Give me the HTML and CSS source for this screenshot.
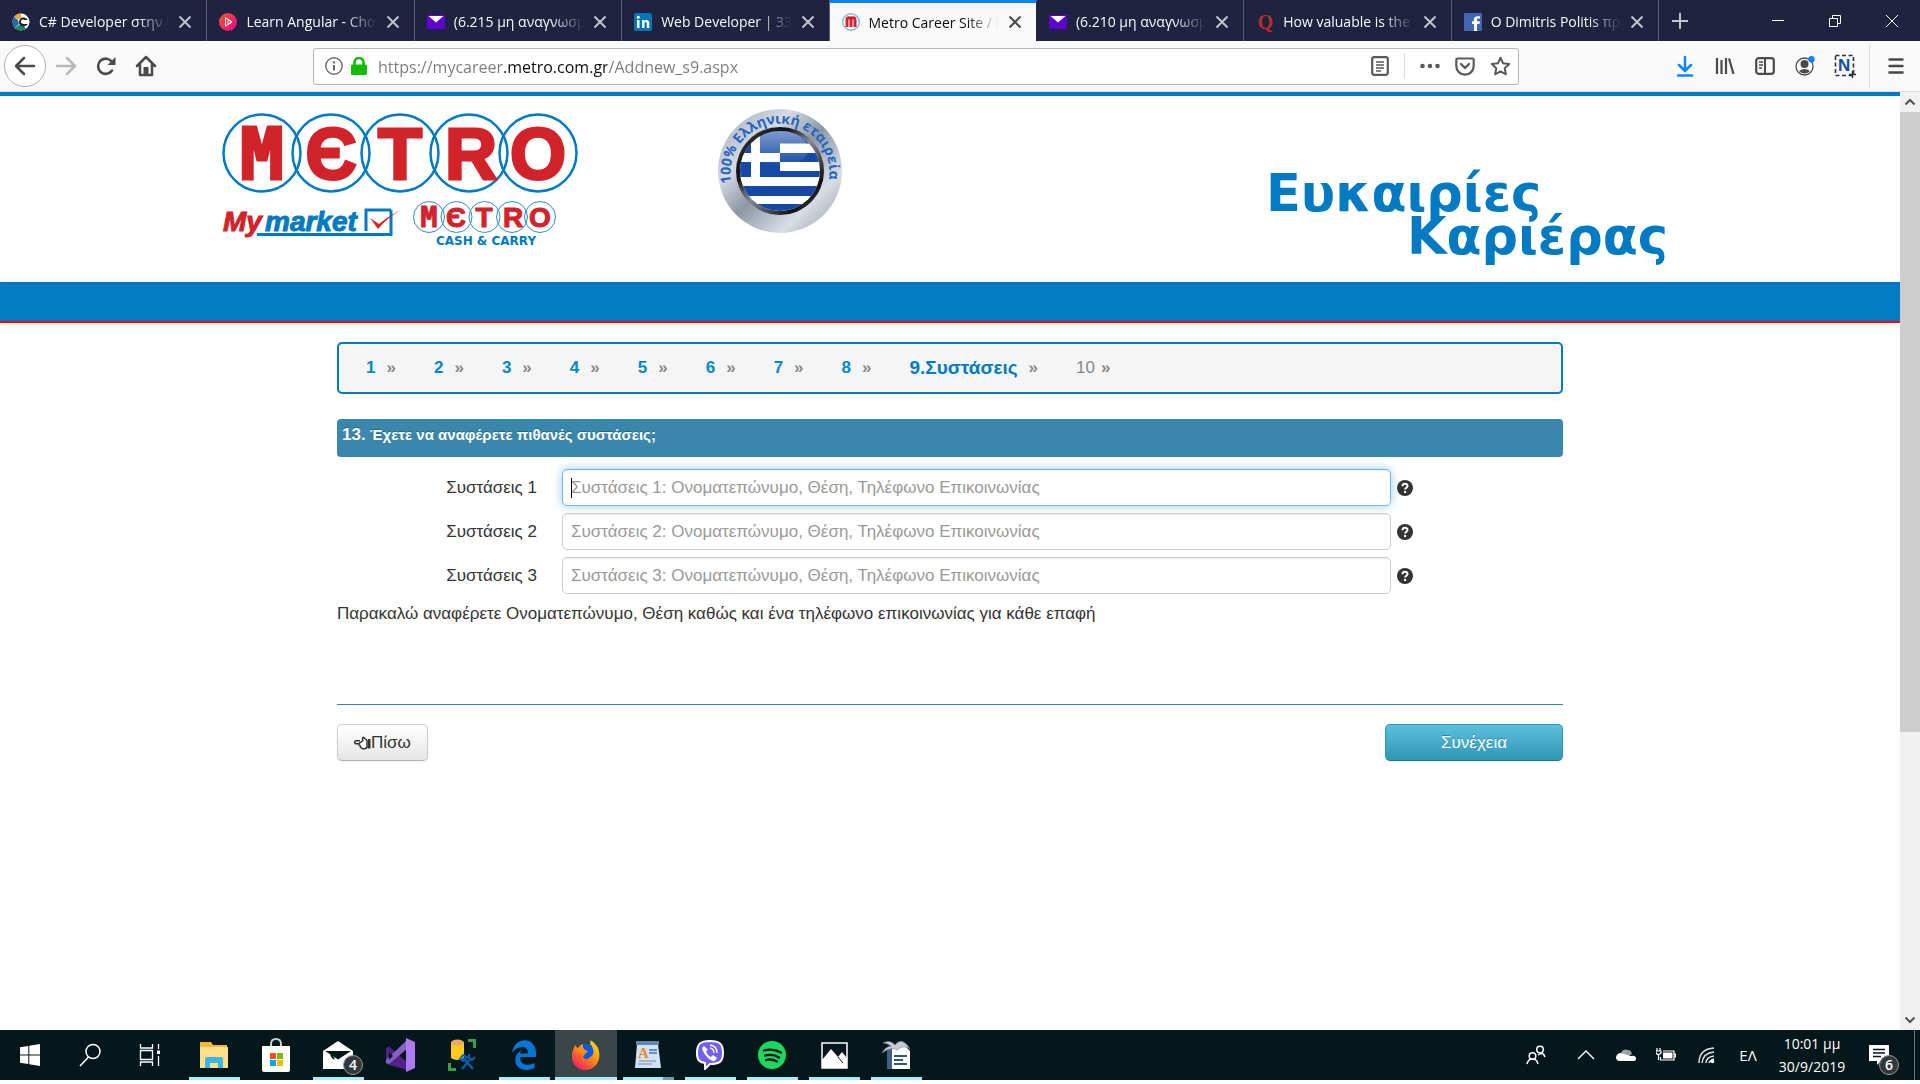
FILE: index.html
```html
<!DOCTYPE html>
<html lang="el">
<head>
<meta charset="utf-8">
<meta name="viewport" content="width=device-width, initial-scale=1">
<title>Metro Career Site</title>
<link rel="stylesheet" href="styles.css">
</head>
<body>
<svg class="defs" width="0" height="0" aria-hidden="true">
  <defs>
    <symbol id="x" viewBox="0 0 14 14"><path d="M1.500 1.500 12.500 12.500M12.500 1.500 1.500 12.500" fill="none" stroke="currentColor" stroke-width="2"/></symbol>
    <symbol id="mail" viewBox="0 0 18 14"><rect width="18" height="14" rx="1" fill="#5f01d1"/><path d="M1.500 1h15L9 7.500z" fill="#fff"/></symbol>
    <symbol id="help" viewBox="0 0 18 18"><circle cx="9" cy="9" r="8" fill="#333"/><path d="M6.500 7.200C6.500 4 11.700 4.200 11.500 7c-.1 1.700-2.400 1.700-2.400 3.600" fill="none" stroke="#fff" stroke-width="2"/><circle cx="9.100" cy="13" r="1.200" fill="#fff"/></symbol>
  </defs>
</svg>

<header class="browser">
  <div class="tabs">
    <div class="tab-strip">
      <div class="tab">
        <svg class="fav" viewBox="0 0 18 18"><circle cx="9" cy="9" r="8.500" fill="#fff"/><path d="M9 .5A8.500 8.500 0 0 0 2 4l4 2.500L9 5z" fill="#f5a623"/><path d="M2 4a8.500 8.500 0 0 0 1 11l4-4-1-4z" fill="#1d6fa8"/><path d="M3 15a8.500 8.500 0 0 0 11 .8L11 12H7z" fill="#178a6a"/><path d="M9 5c4-1 5 0 7 2h-4c-3-2-5 4 0 4h4c-3 4-9 3-9-2 0-2 1-3 2-4z" fill="#222"/></svg>
        <button class="tab-title">C# Developer στην θέση</button>
        <button class="tab-close" aria-label="Κλείσιμο"><svg><use href="#x"/></svg></button>
      </div>
      <div class="tab">
        <svg class="fav" viewBox="0 0 18 18"><defs><linearGradient id="ps" x2="1" y2="1"><stop stop-color="#f15b2a"/><stop offset="1" stop-color="#ec008c"/></linearGradient></defs><circle cx="9" cy="9" r="9" fill="url(#ps)"/><path d="M6.500 4.800 13 9l-6.500 4.200zM9 6.500v5L12.500 9z" fill="none" stroke="#fff"/></svg>
        <button class="tab-title">Learn Angular - Choose</button>
        <button class="tab-close" aria-label="Κλείσιμο"><svg><use href="#x"/></svg></button>
      </div>
      <div class="tab">
        <svg class="fav wide"><use href="#mail"/></svg>
        <button class="tab-title">(6.215 μη αναγνωσμένα)</button>
        <button class="tab-close" aria-label="Κλείσιμο"><svg><use href="#x"/></svg></button>
      </div>
      <div class="tab">
        <svg class="fav" viewBox="0 0 18 18"><rect width="18" height="18" rx="2" fill="#0077b5"/><path d="M3 7h2.500v8H3zM8 7h2.300v1.200C11.500 6.300 15.300 6.500 15.300 10v5h-2.500v-4.300c0-2.200-2.300-2-2.300 0V15H8z" fill="#fff"/><circle cx="4.250" cy="4.300" r="1.500" fill="#fff"/></svg>
        <button class="tab-title">Web Developer | 33 new</button>
        <button class="tab-close" aria-label="Κλείσιμο"><svg><use href="#x"/></svg></button>
      </div>
      <div class="tab active">
        <svg class="fav" viewBox="0 0 18 18"><circle cx="9" cy="9" r="8.300" fill="#fff" stroke="#7fb7dd" stroke-width="1.400"/><path d="M5 14V6.500C5 4 9 4 9 6.500V14M9 6.500C9 4 13 4 13 6.500V14" fill="none" stroke="#d2232a" stroke-width="3"/></svg>
        <button class="tab-title">Metro Career Site / Be</button>
        <button class="tab-close" aria-label="Κλείσιμο"><svg><use href="#x"/></svg></button>
      </div>
      <div class="tab">
        <svg class="fav wide"><use href="#mail"/></svg>
        <button class="tab-title">(6.210 μη αναγνωσμένα)</button>
        <button class="tab-close" aria-label="Κλείσιμο"><svg><use href="#x"/></svg></button>
      </div>
      <div class="tab">
        <span class="fav quora">Q</span>
        <button class="tab-title">How valuable is the best</button>
        <button class="tab-close" aria-label="Κλείσιμο"><svg><use href="#x"/></svg></button>
      </div>
      <div class="tab">
        <svg class="fav" viewBox="0 0 18 18"><rect width="18" height="18" rx="1" fill="#4267b2"/><path d="M10 18v-7H8V8.200h2V6.500C10 3.800 11.500 2.800 16 3.300v2.300c-2.400 0-3-.1-3 1.200v1.400h2.900L15.500 11H13v7z" fill="#fff"/></svg>
        <button class="tab-title">Ο Dimitris Politis πρόσθεσε</button>
        <button class="tab-close" aria-label="Κλείσιμο"><svg><use href="#x"/></svg></button>
      </div>
    </div>
    <button class="new-tab" aria-label="Νέα καρτέλα"><svg width="18" height="18" viewBox="0 0 18 18"><path d="M9 1v16M1 9h16" stroke="currentColor" stroke-width="2"/></svg></button>
    <div class="window-buttons">
      <button aria-label="Ελαχιστοποίηση"><svg width="14" height="14" viewBox="0 0 14 14"><path d="M1 6.500h12" stroke="#fff"/></svg></button>
      <button aria-label="Επαναφορά"><svg width="14" height="14" viewBox="0 0 14 14"><path d="M1.500 4.500h8v8h-8zM4.500 4.500v-3h8v8h-3" fill="none" stroke="#fff"/></svg></button>
      <button aria-label="Κλείσιμο παραθύρου"><svg width="14" height="14" viewBox="0 0 14 14"><path d="m1 1 12 12M13 1 1 13" stroke="#fff"/></svg></button>
    </div>
  </div>

  <div class="toolbar">
    <div class="nav-buttons">
      <button class="back" aria-label="Πίσω"><svg width="22" height="20" viewBox="0 0 22 20"><path d="M20 10H3M10 2l-8 8 8 8" fill="none" stroke="#4a4a4b" stroke-width="2.500" stroke-linecap="round" stroke-linejoin="round"/></svg></button>
      <button aria-label="Εμπρός"><svg width="22" height="20" viewBox="0 0 22 20"><path d="M2 10h17M12 2l8 8-8 8" fill="none" stroke="#b9b9ba" stroke-width="2.500" stroke-linecap="round" stroke-linejoin="round"/></svg></button>
      <button aria-label="Ανανέωση"><svg width="20" height="20" viewBox="0 0 20 20"><path d="M16 14.500A7.600 7.600 0 1 1 16 6" fill="none" stroke="#4a4a4b" stroke-width="2.600" stroke-linecap="round"/><path d="M19.500 1v8h-8z" fill="#4a4a4b"/></svg></button>
      <button aria-label="Αρχική"><svg width="22" height="22" viewBox="0 0 22 22"><path d="M2 11 11 2l9 9M5 9.500V20h12V9.500" fill="none" stroke="#4a4a4b" stroke-width="2.500" stroke-linecap="round" stroke-linejoin="round"/><path d="M8.500 19.500V12h5v7.500z" fill="#4a4a4b"/></svg></button>
    </div>
    <div class="url-bar">
      <svg width="18" height="18" viewBox="0 0 18 18"><circle cx="9" cy="9" r="8.200" fill="none" stroke="#6b6b6c" stroke-width="1.400"/><path d="M9 8v5.500M9 4.200v2.200" stroke="#6b6b6c" stroke-width="2"/></svg>
      <svg width="16" height="18" viewBox="0 0 16 18"><path d="M3.500 8V5.500a4.500 4.500 0 0 1 9 0V8" fill="none" stroke="#12bc00" stroke-width="2.600"/><rect y="7.500" width="16" height="10.500" rx="1.500" fill="#12bc00"/></svg>
      <input class="url" type="text" aria-label="Διεύθυνση" value="https://mycareer.metro.com.gr/Addnew_s9.aspx">
      <div class="url-actions">
        <button aria-label="Προβολή ανάγνωσης"><svg width="18" height="20" viewBox="0 0 18 20"><rect x="1.200" y="1.200" width="15.600" height="17.600" rx="2" fill="none" stroke="#5a5a5b" stroke-width="2.200"/><path d="M5 6h8M5 9h8M5 12h8M5 15h5" stroke="#5a5a5b" stroke-width="1.400"/></svg></button>
        <span class="divider"></span>
        <button aria-label="Ενέργειες"><svg width="20" height="6" viewBox="0 0 20 6"><g fill="#5a5a5b"><circle cx="2.500" cy="3" r="2.300"/><circle cx="10" cy="3" r="2.300"/><circle cx="17.500" cy="3" r="2.300"/></g></svg></button>
        <button aria-label="Pocket"><svg width="20" height="19" viewBox="0 0 20 19"><path d="M2.500 1.500h15q1.200 0 1.200 1.200V9a8.700 8.700 0 0 1-17.400 0V2.700q0-1.200 1.200-1.200z" fill="none" stroke="#5a5a5b" stroke-width="2.200"/><path d="m6 7 4 4 4-4" fill="none" stroke="#5a5a5b" stroke-width="2.400" stroke-linecap="round" stroke-linejoin="round"/></svg></button>
        <button aria-label="Σελιδοδείκτης"><svg width="21" height="20" viewBox="0 0 21 20"><path d="m10.500 1.700 2.600 5.600 6.100.7-4.500 4.200 1.200 6.100-5.400-3-5.400 3 1.200-6.100L1.800 8l6.100-.7z" fill="none" stroke="#5a5a5b" stroke-width="2" stroke-linejoin="round"/></svg></button>
      </div>
    </div>
    <div class="tools">
      <button aria-label="Λήψεις"><svg width="18" height="21" viewBox="0 0 18 21"><path d="M9 1v13M3 9l6 6 6-6M2 19.500h14" fill="none" stroke="#0a84ff" stroke-width="2.500" stroke-linecap="round"/></svg></button>
      <button aria-label="Βιβλιοθήκη"><svg width="20" height="20" viewBox="0 0 20 20"><path d="M2 2v16M6.500 4v14M11 2v16M14 2.500 18.500 18" stroke="#4a4a4b" stroke-width="2.200"/></svg></button>
      <button aria-label="Πλευρική στήλη"><svg width="20" height="18" viewBox="0 0 20 18"><rect x="1.200" y="1.200" width="17.600" height="15.600" rx="2.500" fill="none" stroke="#4a4a4b" stroke-width="2.200"/><path d="M10 1v16" stroke="#4a4a4b" stroke-width="2"/><path d="M4 5h4M4 8h4M4 11h3" stroke="#4a4a4b" stroke-width="1.300"/></svg></button>
      <button aria-label="Λογαριασμός"><svg width="20" height="20" viewBox="0 0 20 20"><circle cx="9.500" cy="10.500" r="8.500" fill="none" stroke="#4a4a4b" stroke-width="1.300"/><circle cx="9.500" cy="8" r="4" fill="#4a4a4b"/><path d="M4 15q5.500-4 11 0-5.500 5-11 0z" fill="#4a4a4b"/><circle cx="16.500" cy="3.200" r="3.200" fill="#0a84ff"/></svg></button>
      <button aria-label="Nimbus"><svg width="22" height="24" viewBox="0 0 22 24"><rect x="1.500" y="1.500" width="18" height="20" fill="none" stroke="#333" stroke-width="1.600" stroke-dasharray="4 2.500"/><text x="4" y="17" class="nimbus">N</text><path d="M15 20.500h7M18.500 17v7" stroke="#333" stroke-width="1.500"/></svg></button>
      <span class="divider tall"></span>
      <button aria-label="Μενού"><svg width="16" height="18" viewBox="0 0 16 18"><path d="M1.500 2.500h13M1.500 9h13M1.500 15.500h13" stroke="#4a4a4b" stroke-width="2.500" stroke-linecap="round"/></svg></button>
    </div>
  </div>
</header>

<div class="viewport">
  <div class="page">
    <header class="masthead">
      <div class="masthead-inner">
        <svg class="logo" width="360" height="140" viewBox="220 110 360 140" role="img" aria-label="Metro, My market, Metro Cash &amp; Carry">
          <g fill="none" stroke="#007ac3" stroke-width="2.500"><circle cx="262" cy="153" r="38.500"/><circle cx="331" cy="153" r="38.500"/><circle cx="400" cy="153" r="38.500"/><circle cx="469" cy="153" r="38.500"/><circle cx="538" cy="153" r="38.500"/></g>
          <g class="logo-big"><text class="narrow" x="262" y="179">M</text><text x="331" y="179">Є</text><text x="400" y="179">T</text><text x="471" y="179">R</text><text x="538" y="179">O</text></g>
          <text class="my" x="223" y="231">My</text><text class="market" x="265" y="231">market</text>
          <path d="M366 231v-21h25M391 210v24.500H257" fill="none" stroke="#007ac3" stroke-width="3"/>
          <path d="m370 218 8 11q10-12 23-19-11 5-22 14z" fill="#d2232a"/>
          <g fill="none" stroke="#2b8fce"><circle cx="429" cy="217" r="15.500"/><circle cx="456.500" cy="217" r="15.500"/><circle cx="484.500" cy="217" r="15.500"/><circle cx="512" cy="217" r="15.500"/><circle cx="540" cy="217" r="15.500"/></g>
          <g class="logo-small"><text class="narrow" x="429" y="227">M</text><text x="456" y="227">Є</text><text x="484" y="227">T</text><text x="513" y="227">R</text><text x="540" y="227">O</text></g>
          <text class="cash" x="486" y="245">CASH &amp; CARRY</text>
        </svg>
        <svg class="badge" width="126" height="126" viewBox="-63 -63 126 126" role="img" aria-label="100% Ελληνική εταιρεία">
          <defs>
            <linearGradient id="silver" x1="0" y1="0" x2="1" y2="1"><stop stop-color="#a3abb9"/><stop offset=".3" stop-color="#d5dae2"/><stop offset=".5" stop-color="#8d97a6"/><stop offset=".75" stop-color="#d9dee5"/><stop offset="1" stop-color="#8f99a8"/></linearGradient>
            <linearGradient id="rim" x1="0" y1="0" x2="1" y2="1"><stop stop-color="#444"/><stop offset=".3" stop-color="#111"/><stop offset=".5" stop-color="#889"/><stop offset=".8" stop-color="#111"/><stop offset="1" stop-color="#778"/></linearGradient>
            <linearGradient id="gloss" x2="0" y2="1"><stop stop-color="#fff" stop-opacity=".45"/><stop offset="1" stop-color="#fff" stop-opacity="0"/></linearGradient>
            <clipPath id="disc"><circle r="40"/></clipPath>
            <path id="arc" d="M-48.500 12A49.500 49.500 0 1 1 49 9"/>
          </defs>
          <circle r="62" fill="url(#silver)"/>
          <circle r="44" fill="url(#rim)"/>
          <g clip-path="url(#disc)">
            <rect x="-41" y="-41" width="82" height="82" fill="#fff"/>
            <path d="M-41-41h82v13.500h-82zM0-18h41v9H0zM0 0h41v6H0z" fill="#1549a5"/>
            <path d="M-41-41H0V6h-41z" fill="#1549a5"/>
            <path d="M-29-41h9V6h-9zM-41-18H0v9h-41z" fill="#fff"/>
            <path d="M-41 15h82v10h-82zM-41 33h82v8h-82z" fill="#1549a5"/>
            <ellipse cx="0" cy="-22" rx="28" ry="18" fill="url(#gloss)"/>
          </g>
          <text class="badge-text"><textPath href="#arc">100% Ελληνική εταιρεία</textPath></text>
        </svg>
        <h1 class="headline"><span>Ευκαιρίες</span><span class="second">Καριέρας</span></h1>
      </div>
      <div class="band"></div>
    </header>

    <main class="content">
      <nav class="steps" aria-label="Βήματα">
        <ol>
          <li><a href="#1">1</a><span>»</span></li>
          <li><a href="#2">2</a><span>»</span></li>
          <li><a href="#3">3</a><span>»</span></li>
          <li><a href="#4">4</a><span>»</span></li>
          <li><a href="#5">5</a><span>»</span></li>
          <li><a href="#6">6</a><span>»</span></li>
          <li><a href="#7">7</a><span>»</span></li>
          <li><a href="#8">8</a><span>»</span></li>
          <li><a class="current" href="#9" aria-current="step">9.Συστάσεις</a><span>»</span></li>
          <li class="next">10<span>»</span></li>
        </ol>
      </nav>

      <form>
        <h2 class="question"><span class="number">13.</span> Έχετε να αναφέρετε πιθανές συστάσεις;</h2>
        <div class="fields">
          <div class="row">
            <label for="ref1">Συστάσεις 1</label>
            <div class="control focused"><input id="ref1" type="text" placeholder="Συστάσεις 1: Ονοματεπώνυμο, Θέση, Τηλέφωνο Επικοινωνίας"></div>
            <svg class="help"><use href="#help"/></svg>
          </div>
          <div class="row">
            <label for="ref2">Συστάσεις 2</label>
            <div class="control"><input id="ref2" type="text" placeholder="Συστάσεις 2: Ονοματεπώνυμο, Θέση, Τηλέφωνο Επικοινωνίας"></div>
            <svg class="help"><use href="#help"/></svg>
          </div>
          <div class="row">
            <label for="ref3">Συστάσεις 3</label>
            <div class="control"><input id="ref3" type="text" placeholder="Συστάσεις 3: Ονοματεπώνυμο, Θέση, Τηλέφωνο Επικοινωνίας"></div>
            <svg class="help"><use href="#help"/></svg>
          </div>
        </div>
        <p class="note">Παρακαλώ αναφέρετε Ονοματεπώνυμο, Θέση καθώς και ένα τηλέφωνο επικοινωνίας για κάθε επαφή</p>
        <div class="actions">
          <button class="btn" type="button"><svg width="17" height="14" viewBox="0 0 17 14"><path d="M6 4.800H2.200a1.500 1.500 0 0 0 0 3H5M5 7.500q-.5 1.500 1 2 0 1.500 1 2 .5 1.200 2 1.200h2l2-1.200V4.500L9.500 1.200Q8 1.500 8.800 4.800z" fill="#fff" stroke="#333" stroke-width="1.500"/><rect x="14" y="3" width="2.500" height="9.500" fill="#333"/></svg>Πίσω</button>
          <button class="btn primary" type="submit">Συνέχεια</button>
        </div>
      </form>
    </main>
  </div>
  <div class="scrollbar" aria-hidden="true">
    <svg width="20" height="20" viewBox="0 0 20 20"><path d="m5.500 12.500 4.500-4.500 4.500 4.500" fill="none" stroke="#505050" stroke-width="2"/></svg>
    <div class="track"><div class="thumb"></div></div>
    <svg width="20" height="20" viewBox="0 0 20 20"><path d="m5.500 7.500 4.500 4.500 4.500-4.500" fill="none" stroke="#505050" stroke-width="2"/></svg>
  </div>
</div>

<footer class="taskbar">
  <div class="system">
    <button aria-label="Έναρξη"><svg width="20" height="22" viewBox="0 0 20 20" preserveAspectRatio="none"><path d="M0 3l8.300-1.200v7.700H0zM9.300 1.600 20 0v9.500H9.300zM0 10.500h8.300v7.700L0 17zM9.300 10.500H20V20L9.300 18.400z" fill="#fff"/></svg></button>
    <button aria-label="Αναζήτηση"><svg width="22" height="24" viewBox="0 0 22 24"><circle cx="14" cy="8.500" r="7" fill="none" stroke="#fff" stroke-width="1.500"/><path d="M9.500 14 1 23" stroke="#fff" stroke-width="1.500"/></svg></button>
    <button aria-label="Προβολή εργασιών"><svg width="22" height="24" viewBox="0 0 22 24"><path d="M1.500 1v4h12V1M1.500 7.500h12v9h-12zM1.500 23v-4h12v4M19.500 1v5M19.500 13v10" fill="none" stroke="#fff" stroke-width="1.300"/><path d="M18 7.500h3v3.500h-3z" fill="#fff"/></svg></button>
  </div>
  <div class="apps">
    <button class="open" aria-label="Εξερεύνηση"><svg width="28" height="28" viewBox="0 0 28 28"><path d="M0 1h11l2 3h14v23H0z" fill="#f0b93a"/><path d="M0 6h28v21H0z" fill="#ffe08a"/><path d="M5 27V18q0-2 2-2h14q2 0 2 2v9h-5v-5h-8v5z" fill="#3fb4e8"/></svg></button>
    <button aria-label="Store"><svg width="30" height="34" viewBox="0 0 30 34"><path d="M10 9V6q0-5 5-5t5 5v3" fill="none" stroke="#ccc" stroke-width="2"/><path d="M1 8h28v24q0 2-2 2H3q-2 0-2-2z" fill="#fff"/><path d="M9 15h6v6H9z" fill="#f25022"/><path d="M16 15h6v6h-6z" fill="#7fba00"/><path d="M9 22h6v6H9z" fill="#00a4ef"/><path d="M16 22h6v6h-6z" fill="#ffb900"/></svg></button>
    <button class="open" aria-label="Mail"><svg width="30" height="28" viewBox="0 0 30 28"><path d="M0 10 15 0l15 10v18H0z" fill="#fff"/><path d="M2 10h26L15 18.500z" fill="#04171b"/><path d="m8 14 3 4" stroke="#04171b" stroke-width="2"/></svg><span class="count">4</span></button>
    <button aria-label="Visual Studio"><svg width="30" height="34" viewBox="0 0 30 34"><path d="M1 10 4 8.500 22 24v8L3 26.500 1 25z" fill="#52218a"/><path d="M1 25 4 26 22 11V2L1 22z" fill="#865fc5"/><path d="m21 0 9 4v26l-9 4z" fill="#b179f1"/><path d="m4 14 4 4-4 4z" fill="#04171b"/></svg></button>
    <button aria-label="SQL"><svg width="28" height="32" viewBox="0 0 28 32"><path d="M3 3v16q6 4 13 0V3z" fill="#ffcb1f"/><ellipse cx="9.500" cy="3.500" rx="6.500" ry="3" fill="#f0a860"/><path d="M20 1.500h6.500V9M1.500 24v6.500H8" fill="none" stroke="#3f9b46" stroke-width="3"/><path d="m15 19 10 11M23 19 14 30" stroke="#0d5ea8" stroke-width="2.500"/><path d="m12 20 3-4 4 2-4 4zM21 15v4l3 2 3-3" fill="none" stroke="#0d5ea8" stroke-width="2"/></svg></button>
    <button class="open" aria-label="Edge"><svg width="26" height="30" viewBox="0 0 26 30"><path d="M1 13C3-4 25-4 25 13v4H9c0 9 9 9 14.500 6v5C13 33 3 28 4.500 18c.5-4 4-7 7-8-2 1-2.500 3-2.500 3.500h8c0-9-11-8-16-.5z" fill="#0078d7"/></svg></button>
    <button class="open active" aria-label="Firefox"><svg width="28" height="30" viewBox="0 0 28 30"><defs><linearGradient id="ff" x1=".9" y1="0" x2=".2" y2="1"><stop stop-color="#ffe226"/><stop offset=".5" stop-color="#ff8a16"/><stop offset="1" stop-color="#f5156c"/></linearGradient></defs><circle cx="14" cy="14" r="10" fill="#0a5be0"/><path d="M3 5q1 2 3 3 2-3 5-4-1 4 2 6l3 1-3 3-2 3q3 4 6 1 6-3 4-9-1-4-3-5 1-2 0-4 4 2 6 5l2 3c5 13-4 22-13 22S-3 21 1 10z" fill="url(#ff)"/></svg></button>
    <button class="open grouped" aria-label="WordPad"><svg width="26" height="28" viewBox="0 0 26 28"><path d="M2 3h21l3 24H0z" fill="#cfe3f5"/><rect x="1" width="23" height="4" fill="#5d88b0"/><text x="3" y="17" class="wordpad">A</text><path d="M14 9h8M14 12h8" stroke="#4878b0" stroke-width="1.600"/><path d="M4 20h17M3 23h14" stroke="#96a9bd" stroke-width="1.500"/></svg></button>
    <button class="open" aria-label="Viber"><svg width="28" height="30" viewBox="0 0 28 30"><path d="M14 1c10 0 13 3 13 12s-4 11-13 11l-5 5v-6C3 22 1 20 1 13 1 4 4 1 14 1z" fill="#7360f2" stroke="#fff" stroke-width="2"/><path d="M8 6q-3 2-1 5 4 8 10 10 2 1 4-3l-4-3-2 2q-4-2-5-6l2-1z" fill="#fff"/><path d="M14 5q7 1 7 8M14 8q4 1 4 5" fill="none" stroke="#fff" stroke-width="1.300"/></svg></button>
    <button class="open" aria-label="Spotify"><svg width="28" height="28" viewBox="0 0 28 28"><circle cx="14" cy="14" r="14" fill="#1ed760"/><path d="M6 9.500q9-2.500 17 2M7 14.500q8-2 14 2M8 19q6-1.500 11 1.500" fill="none" stroke="#04171b" stroke-width="2.300" stroke-linecap="round"/></svg></button>
    <button class="open" aria-label="Φωτογραφίες"><svg width="27" height="27" viewBox="0 0 27 27"><path d="M1 1h25v25H1z" fill="none" stroke="#fff" stroke-width="1.500"/><path d="M1 18 10 7l7 8 4-5 5 6v10H1z" fill="#fff"/><path d="m17 15 5 6" stroke="#04171b"/></svg></button>
    <button class="open" aria-label="OpenOffice"><svg width="30" height="30" viewBox="0 0 30 30"><path d="M6 8h20l3 4v17H6z" fill="#3f6284"/><path d="M11 6h13l5 5v18H11z" fill="#fff"/><path d="M13 16h13M13 20h9M13 24h13" stroke="#35597e" stroke-width="1.800"/><path d="M2 3q7-4 12 2Q21-4 29 9q-7-5-13 1-5-4-15 3 3-6 9-7-4-3-8-3z" fill="#c6ccd3" stroke="#6d7882" stroke-width=".6"/></svg></button>
  </div>
  <div class="tray">
    <button aria-label="Άτομα"><svg width="20" height="20" viewBox="0 0 20 20"><g fill="none" stroke="#fff" stroke-width="1.500"><circle cx="14" cy="4.500" r="3.300"/><circle cx="6.500" cy="11" r="3.300"/><path d="M1 19q1-5 5.500-5T12 19M12 10q5-4 7 2"/></g></svg></button>
    <button aria-label="Κρυφά εικονίδια"><svg width="18" height="10" viewBox="0 0 18 10"><path d="m1 9 8-8 8 8" fill="none" stroke="#fff" stroke-width="1.400"/></svg></button>
    <button aria-label="OneDrive"><svg width="20" height="14" viewBox="0 0 20 14"><path d="M5 5q2-5 7-3 3 0 4 4l-6 3z" fill="#9aa3a6"/><path d="M4 13q-4 0-4-4 1-4 5-4l10 3q5-1 5 3 0 2-3 2z" fill="#fff"/></svg></button>
    <button aria-label="Μπαταρία"><svg width="20" height="14" viewBox="0 0 20 14"><path d="M7 3h11v9H4.500V9M18 6h1.500v3H18" fill="none" stroke="#fff" stroke-width="1.200"/><path d="M7 4.500h9.500v6H7z" fill="#fff"/><path d="M1 0v3m3-3v3M0 3h5v2q-2.500 3-5 0zM2.500 6v6" fill="none" stroke="#fff" stroke-width="1.200"/></svg></button>
    <button aria-label="Δίκτυο"><svg width="17" height="17" viewBox="0 0 17 17"><path d="M1 16Q1 2 16 1M4 16Q5 6 16 5M8 16q0-6 8-7M11 16q1-3 5-4" fill="none" stroke="#dfe4e5" stroke-width="1.400"/><circle cx="14.500" cy="14.500" r="1.800" fill="#fff"/></svg></button>
    <button class="lang">ΕΛ</button>
    <button class="clock"><span>10:01 μμ</span><span>30/9/2019</span></button>
    <button class="notes" aria-label="Ειδοποιήσεις"><svg width="20" height="20" viewBox="0 0 20 20"><path d="M0 0h20v16h-8l-4 4v-4H0z" fill="#fff"/><path d="M4 4.500h12M4 8h12M4 11.500h8" stroke="#04171b" stroke-width="1.300"/></svg><span class="count">6</span></button>
  </div>
</footer>
</body>
</html>
```
FILE: styles.css
```css
* { box-sizing: border-box; }

:root {
  --blue: #007ac3;
  --ui: "Open Sans", "Noto Sans", sans-serif;
  --body: "Liberation Sans", Arial, sans-serif;
}

body {
  margin: 0;
  min-height: 100vh;
  padding-bottom: 4px;
  display: flex;
  flex-direction: column;
  background: #fff;
  font-family: var(--body);
  color: #333;
}

button {
  padding: 0;
  border: 0;
  background: none;
  font: inherit;
  color: inherit;
  display: flex;
  align-items: center;
  justify-content: center;
}

svg { display: block; flex: none; }
.defs { position: absolute; }

/* Browser chrome */
.browser { font-family: var(--ui); }

.tabs {
  display: flex;
  height: 41px;
  background: #202340;
  color: #f9f9fa;
}

.tab-strip {
  flex: 0 1 1659px;
  min-width: 0;
  display: flex;
}

.tab {
  flex: 1 1 0;
  min-width: 0;
  display: flex;
  align-items: center;
  gap: 9px;
  padding: 2px 14px 0 12px;
  border-right: 1px solid #5b5d73;
}

.tab.active {
  background: #f9f9fa;
  color: #0c0c0d;
  border-top: 3px solid #0a84ff;
  border-right-color: #202340;
  padding-top: 0;
}

.fav { width: 18px; height: 18px; flex: none; }
.fav.wide { height: 14px; }

.quora {
  color: #b92b27;
  font: 700 20px/18px "Liberation Serif", serif;
  text-align: center;
}

.tab-title {
  flex: 1;
  min-width: 0;
  justify-content: flex-start;
  overflow: hidden;
  white-space: nowrap;
  font-size: 14px;
  -webkit-mask-image: linear-gradient(90deg, #000 75%, transparent);
  mask-image: linear-gradient(90deg, #000 75%, transparent);
}

.tab-close { color: #c3c4cd; }
.tab-close svg { width: 14px; height: 14px; }
.active .tab-close { color: #4a4a4b; }
.new-tab { width: 42px; color: #c3c4cd; }

.window-buttons { display: flex; margin-left: auto; }
.window-buttons button { width: 57px; }

.toolbar {
  display: flex;
  align-items: center;
  height: 51px;
  background: #f9f9fa;
  border-bottom: 1px solid #dcdcdd;
}

.nav-buttons { display: flex; padding-left: 4px; width: 313px; }
.nav-buttons button { width: 40px; }
.nav-buttons .back {
  width: 42px;
  height: 42px;
  border: 1px solid #b1b1b3;
  border-radius: 50%;
  background: #fff;
}

.url-bar {
  flex: 1;
  display: flex;
  align-items: center;
  height: 37px;
  gap: 16px;
  padding: 0 7px 0 11px;
  border: 1px solid #b6b6b7;
  border-radius: 3px;
  background: #fff;
}

.url-bar > svg + svg { margin-left: -8px; }

.url {
  flex: 1;
  min-width: 0;
  margin-left: -5px;
  padding: 2px 0 0;
  border: 0;
  outline: 0;
  font: 16px/24px var(--ui);
  color: transparent;
  background: linear-gradient(90deg, #7a7a7c 125px, #0c0c0d 125px 229px, #7a7a7c 229px);
  -webkit-background-clip: text;
  background-clip: text;
}

.url-actions { display: flex; align-items: center; gap: 15px; }
.divider { width: 1px; height: 26px; background: #dcdcdd; }

.tools {
  display: flex;
  align-items: center;
  width: 401px;
  padding-left: 146px;
}

.tools button { width: 40px; }
.divider.tall { height: 42px; margin: 0 6px 0 4px; }

.nimbus { font: 700 17px "Liberation Sans", sans-serif; fill: #0b4ea2; }

/* Viewport and scrollbar */
.viewport { flex: 1; display: flex; }
.page { flex: 1; min-width: 0; }

.scrollbar {
  width: 20px;
  display: flex;
  flex-direction: column;
  background: #f0f0f0;
}

.track { flex: 1; }
.thumb { height: 69%; background: #cdcdcd; }

/* Masthead */
.masthead { border-top: 4px solid var(--blue); }

.masthead-inner {
  display: flex;
  align-items: flex-start;
  height: 186px;
  max-width: 1460px;
  margin: 0 auto;
  padding-top: 14px;
}

.badge { margin-left: 137px; margin-top: -2px; }

.logo text { font-family: "Liberation Sans", Arial, sans-serif; font-weight: 700; }
.logo-big, .logo-small { fill: #d2232a; stroke: #d2232a; text-anchor: middle; }
.logo-big { font-size: 72px; stroke-width: 3px; }
.logo-small { font-size: 28px; stroke-width: 1px; }
.logo .narrow { font-family: "DejaVu Sans Mono", monospace; }
.logo .my, .logo .market { font-size: 28px; font-style: italic; stroke-width: 1px; }
.logo .my { fill: #d2232a; stroke: #d2232a; }
.logo .market { fill: var(--blue); stroke: var(--blue); }
.logo .cash { font-family: "DejaVu Sans", sans-serif; font-size: 12px; fill: var(--blue); text-anchor: middle; }

.badge-text { font: 700 14px "Open Sans", sans-serif; fill: #2464c4; }

.headline {
  display: flex;
  flex-direction: column;
  margin: 62px 12px 0 auto;
  font: 700 51px/43px "DejaVu Sans", sans-serif;
  color: var(--blue);
}

.headline .second { margin-left: 141px; }

.band {
  height: 41px;
  background: var(--blue);
  border-bottom: 2px solid #f00;
  box-shadow: 0 1px 8px rgba(0, 0, 0, .1);
}

/* Form page */
.content {
  max-width: 1226px;
  margin: 19px auto 0;
  font-size: 17px;
}

.steps {
  border: 2px solid var(--blue);
  border-radius: 5px;
  background: #f5f5f5;
  padding: 0 27px;
}

.steps ol {
  display: flex;
  align-items: center;
  gap: 38px;
  height: 48px;
  margin: 0;
  padding: 0;
  list-style: none;
}

.steps li { display: flex; align-items: center; gap: 11px; color: #888; }
.steps span { font-weight: 700; }
.steps .next { gap: 6px; }
.steps a { color: #0088cc; font-weight: 700; text-decoration: none; }
.steps .current { color: var(--blue); font-size: 19px; }

.question {
  height: 38px;
  margin: 25px 0 12px;
  padding: 3px 5px;
  border-radius: 4px;
  background: #3a87ad;
  color: #fff;
  font-size: 15px;
  line-height: 25px;
  text-shadow: 0 -1px 0 rgba(0, 0, 0, .25);
}

.number { font-size: 17px; }

.fields { display: grid; gap: 7px; }

.row {
  display: grid;
  grid-template-columns: 200px 829px 18px;
  column-gap: 25px;
  align-items: center;
}

.row label { text-align: right; }
.help { width: 18px; height: 18px; margin-left: -20px; }

.control { position: relative; }

.control input {
  display: block;
  width: 100%;
  height: 37px;
  padding: 0 8px;
  border: 1px solid #ccc;
  border-radius: 5px;
  outline: 0;
  background: #fff;
  box-shadow: inset 0 1px 1px rgba(0, 0, 0, .075);
  font: inherit;
}

.control input::placeholder { color: #999; opacity: 1; }

.focused input {
  border-color: #74b9ef;
  box-shadow: inset 0 1px 1px rgba(0, 0, 0, .075), 0 0 10px rgba(82, 168, 236, .6);
}

.focused::before {
  content: "";
  position: absolute;
  left: 9px;
  top: 9px;
  width: 1px;
  height: 20px;
  background: #000;
}

.note { margin: 7px 0 0; line-height: 25px; }

.actions {
  display: flex;
  justify-content: space-between;
  margin-top: 78px;
  padding-top: 19px;
  border-top: 1px solid #3a87ad;
}

.btn {
  height: 37px;
  padding: 0 16px;
  border: 1px solid #ccc;
  border-bottom-color: #b3b3b3;
  border-radius: 5px;
  background: linear-gradient(#fff, #e6e6e6);
  box-shadow: 0 1px 2px rgba(0, 0, 0, .08);
}

.btn.primary {
  width: 178px;
  border-color: #2f96b4 #2f96b4 #24748c;
  background: linear-gradient(#5bc0de, #2f96b4);
  color: #fff;
  text-shadow: 0 -1px 0 rgba(0, 0, 0, .25);
}

/* Taskbar */
.taskbar {
  display: flex;
  height: 50px;
  background: #04171b;
  color: #fff;
  font: 15px/23px var(--ui);
}

.system { display: flex; margin-right: 3px; }
.system button { width: 60px; }

.apps { display: flex; }
.apps button { position: relative; width: 62px; }

.apps .open::after {
  content: "";
  position: absolute;
  left: 6px;
  right: 5px;
  bottom: 0;
  height: 3px;
  background: #a6ecfb;
}

.apps .active { background: #3a464a; }
.apps .active::after { left: 0; right: 0; }
.apps .grouped::after { background: linear-gradient(90deg, #a6ecfb 40px, #6fa0aa 40px); }

.count {
  position: absolute;
  right: 6px;
  bottom: 5px;
  width: 20px;
  height: 20px;
  border: 1px solid #999;
  border-radius: 50%;
  background: #33383a;
  font-size: 14px;
  font-weight: 600;
  line-height: 18px;
  text-align: center;
}

.wordpad { font: 700 15px "Liberation Serif", serif; fill: #f08a24; }

.tray { display: flex; margin-left: auto; padding-right: 5px; }
.tray button { width: 40px; }
.tray button:first-child { width: 60px; }
.tray .lang { width: 44px; }
.tray .clock { width: 84px; flex-direction: column; font-size: 14px; }
.tray .notes { position: relative; width: 61px; padding-right: 10px; border-right: 1px solid #687477; }
.notes .count { right: 15px; }
```
